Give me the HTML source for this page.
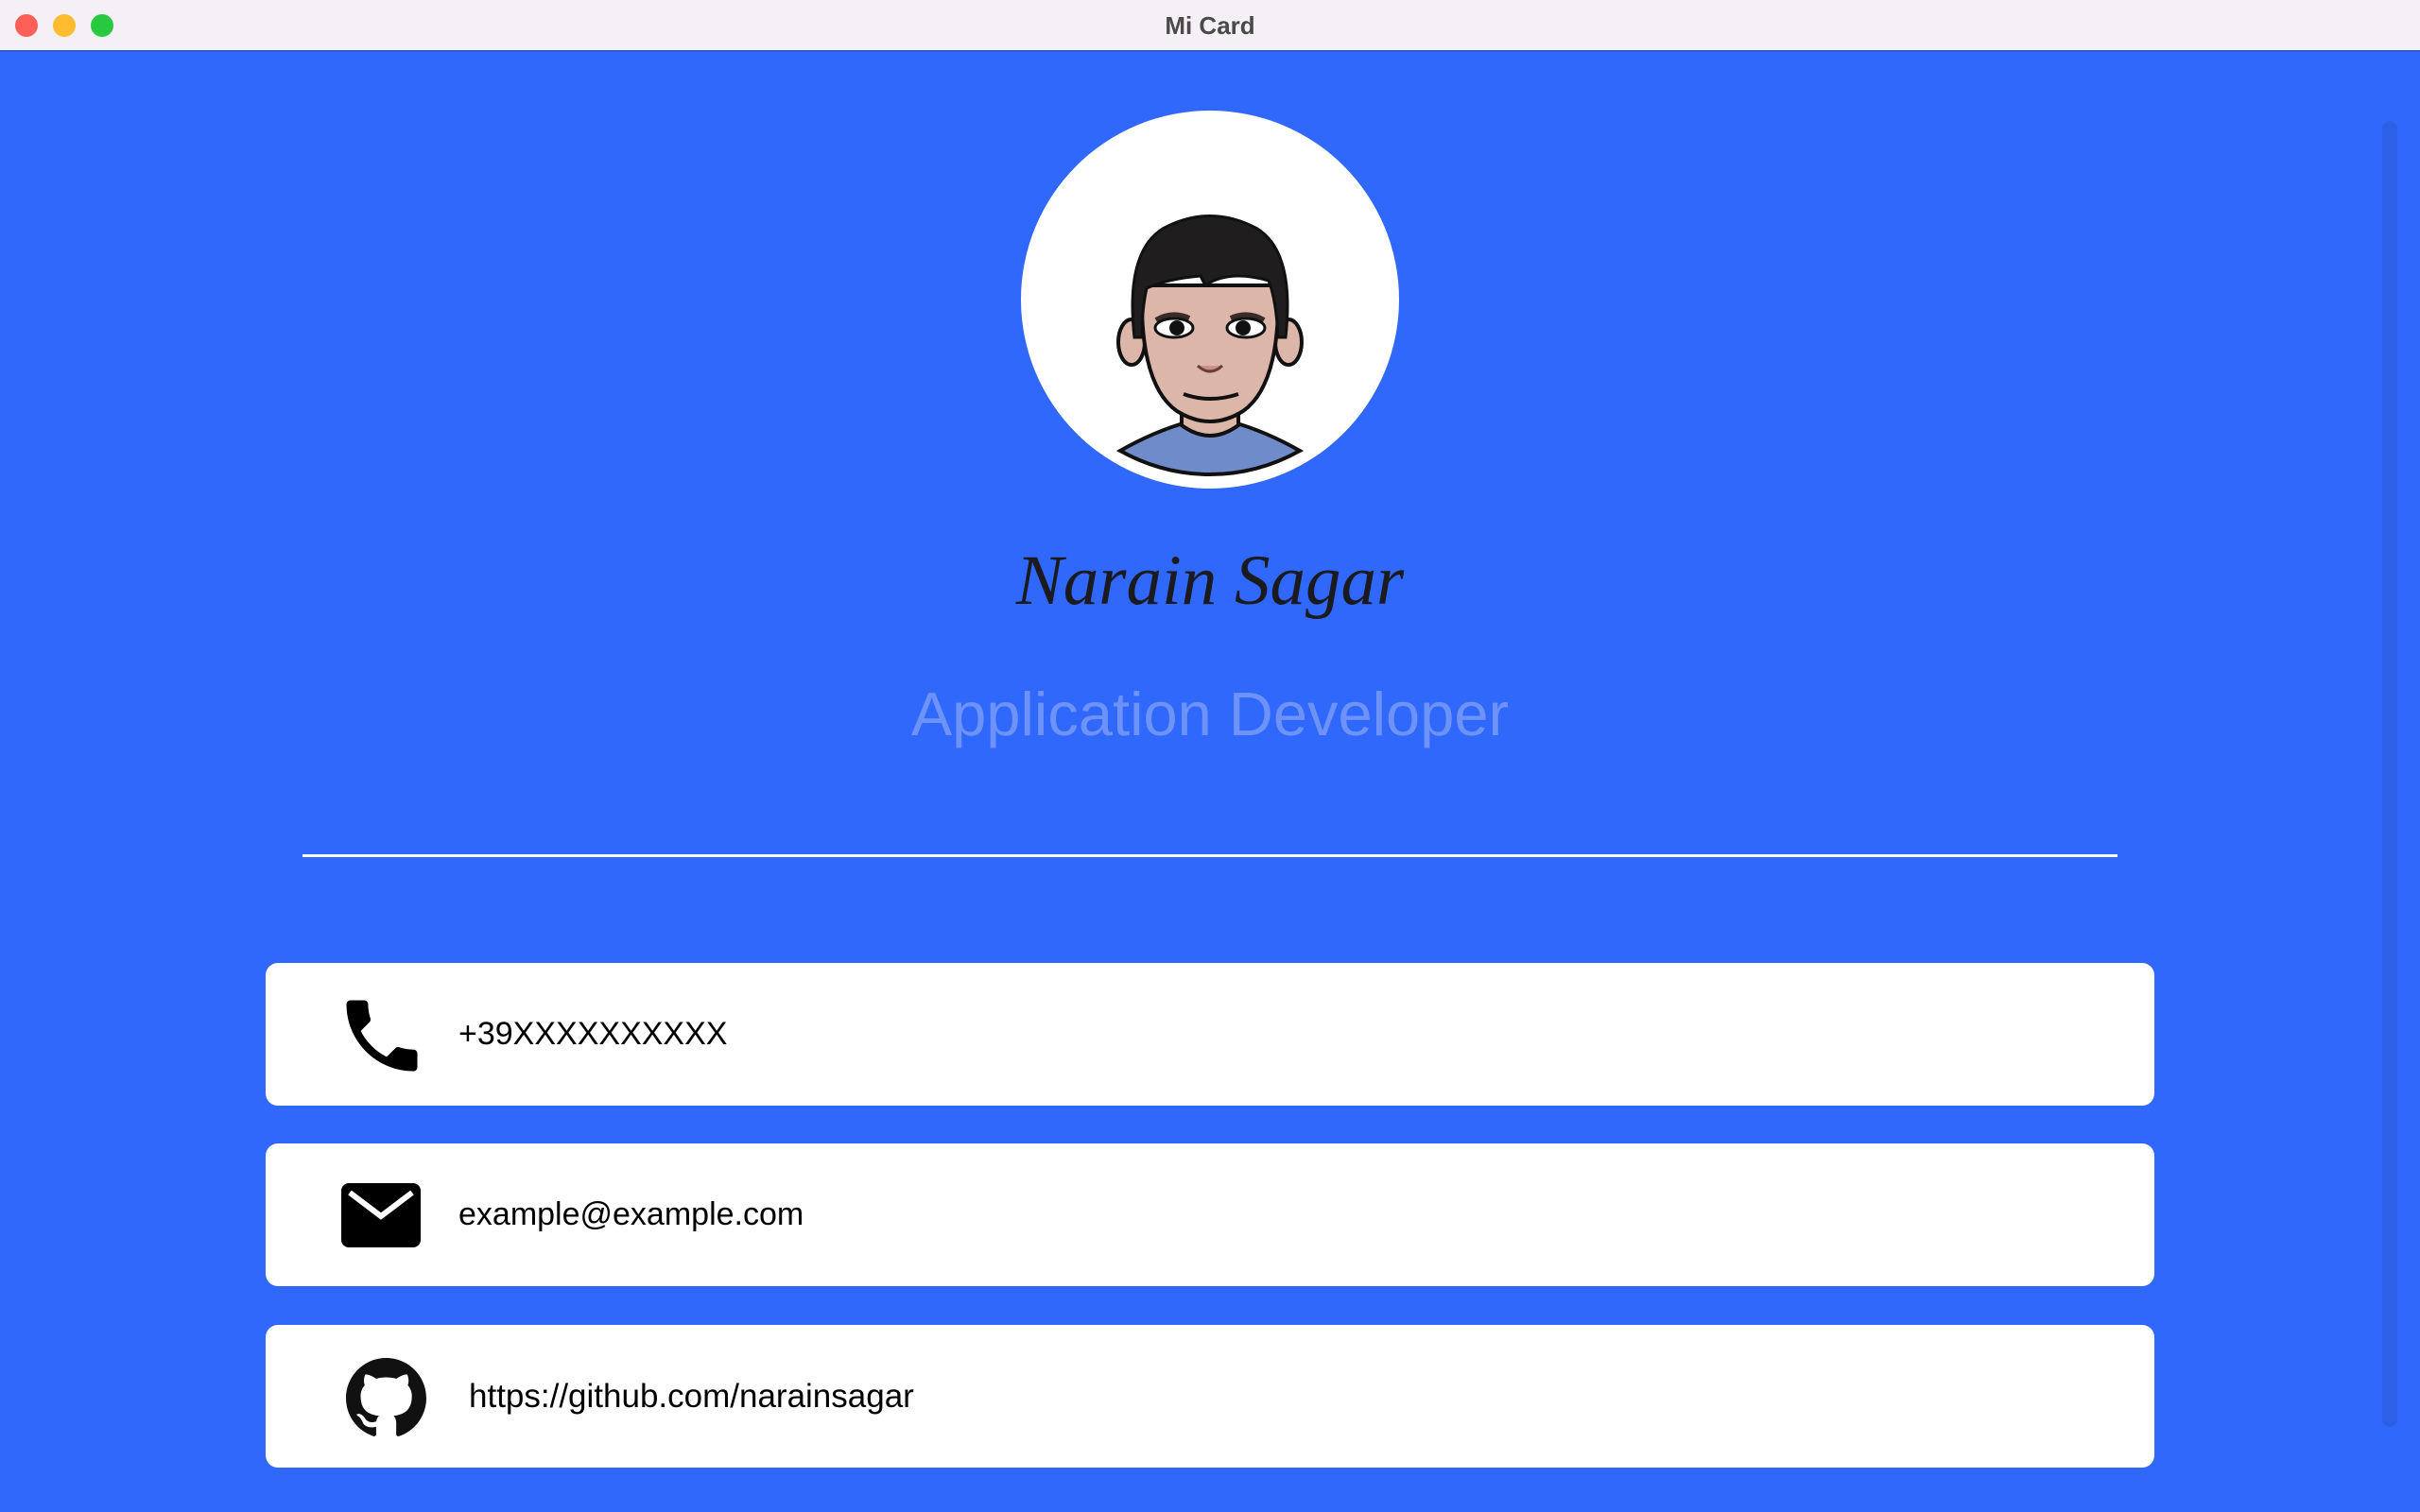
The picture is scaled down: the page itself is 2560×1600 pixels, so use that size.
<!DOCTYPE html>
<html><head><meta charset="utf-8"><style>
*{margin:0;padding:0;box-sizing:border-box}
body{width:2560px;height:1600px;overflow:hidden;background:#3068fb;font-family:"Liberation Sans",sans-serif;position:relative}
.tb{position:absolute;left:0;top:0;width:2560px;height:55px;background:#f5eff6;border-bottom:2px solid #2a58d8}
.tl{position:absolute;top:15px;width:24px;height:24px;border-radius:50%}
.title{position:absolute;top:0;left:0;width:2560px;line-height:54px;text-align:center;font-size:26px;font-weight:bold;color:#4a4a4a}
.av{position:absolute;left:1080px;top:117px;width:400px;height:400px;border-radius:50%;background:#fff;overflow:hidden}
.name{position:absolute;left:0;width:2560px;top:572px;text-align:center;font-family:"Liberation Serif",serif;font-style:italic;font-size:75px;color:#1b1b1f}
.role{position:absolute;left:0;width:2560px;top:718px;text-align:center;font-size:65px;color:#6e93f8}
.hr{position:absolute;left:320px;top:904px;width:1920px;height:3px;background:#fff}
.card{position:absolute;left:281px;width:1998px;height:151px;background:#fff;border-radius:13px}
.card span{position:absolute;top:0;line-height:151px;font-size:34px;color:#000}
.sb{position:absolute;left:2520px;top:128px;width:16px;height:1382px;border-radius:8px;background:#2d60e6}
</style></head><body>
<div class="tb">
<div class="tl" style="left:16px;background:#fe5f57"></div>
<div class="tl" style="left:56px;background:#febc2e"></div>
<div class="tl" style="left:96px;background:#28c840"></div>
<div class="title">Mi Card</div>
</div>
<div class="sb"></div>
<div class="av">
<svg width="400" height="400" viewBox="0 0 400 400">
<path d="M105 360 Q140 340 175 330 L225 330 Q260 340 295 360 Q250 385 200 385 Q150 385 105 360Z" fill="#6f8bc9" stroke="#111" stroke-width="4"/>
<path d="M170 300 L170 333 Q200 355 230 333 L230 300Z" fill="#dcb6a8" stroke="#111" stroke-width="4"/>
<ellipse cx="117" cy="245" rx="14" ry="24" fill="#dcb6a8" stroke="#111" stroke-width="4"/>
<ellipse cx="283" cy="245" rx="14" ry="24" fill="#dcb6a8" stroke="#111" stroke-width="4"/>
<path d="M128 185 Q125 290 165 318 Q200 340 235 318 Q275 290 272 185Z" fill="#dcb6a8" stroke="#111" stroke-width="4"/>
<path d="M120 240 Q110 150 150 125 Q200 98 250 125 Q290 150 280 240 L272 240 Q270 200 262 180 Q220 168 195 185 L190 175 Q155 178 133 188 Q128 210 128 240Z" fill="#1f1d1e" stroke="#111" stroke-width="3"/>
<path d="M143 222 Q160 212 178 220" stroke="#3b2b28" stroke-width="6" fill="none"/>
<path d="M222 220 Q240 212 257 222" stroke="#3b2b28" stroke-width="6" fill="none"/>
<ellipse cx="162" cy="230" rx="20" ry="10" fill="#fff" stroke="#111" stroke-width="3"/>
<ellipse cx="238" cy="230" rx="20" ry="10" fill="#fff" stroke="#111" stroke-width="3"/>
<circle cx="165" cy="230" r="8" fill="#111"/><circle cx="235" cy="230" r="8" fill="#111"/>
<path d="M187 270 Q200 282 213 270" stroke="#6a3f3a" stroke-width="3" fill="#c9908a"/>
<path d="M172 300 Q200 310 230 300" stroke="#111" stroke-width="4" fill="none"/>
</svg></div>
<div class="name">Narain Sagar</div>
<div class="role">Application Developer</div>
<div class="hr"></div>
<div class="card" style="top:1019px">
<svg style="position:absolute;left:73px;top:27px" width="100" height="100" viewBox="0 0 24 24"><path d="M6.62 10.79c1.44 2.83 3.76 5.14 6.59 6.59l2.2-2.2c.27-.27.67-.36 1.02-.24 1.12.37 2.33.57 3.570.57.55 0 1 .45 1 1V20c0 .55-.45 1-1 1-9.39 0-17-7.61-17-17 0-.55.45-1 1-1h3.5c.55 0 1 .45 1 1 0 1.25.2 2.45.57 3.57.11.35.03.74-.25 1.02l-2.2 2.2z" fill="#000"/></svg>
<span style="left:204px">+39XXXXXXXXXX</span></div>
<div class="card" style="top:1210px">
<svg style="position:absolute;left:80px;top:42px" width="84" height="68" viewBox="0 0 84 68"><rect x="0" y="0" width="84" height="68" rx="8" fill="#000"/><path d="M9 10 L42 35 L75 10" stroke="#fff" stroke-width="6" fill="none"/></svg>
<span style="left:204px">example@example.com</span></div>
<div class="card" style="top:1402px">
<svg style="position:absolute;left:85px;top:35px" width="85" height="85" viewBox="0 0 16 16"><path fill="#111" d="M8 0C3.58 0 0 3.58 0 8c0 3.54 2.290 6.53 5.47 7.59.4.07.55-.17.55-.38 0-.19-.01-.82-.01-1.49-2.01.37-2.53-.49-2.69-.94-.09-.23-.48-.94-.82-1.13-.28-.15-.68-.52-.01-.53.63-.01 1.08.58 1.23.82.72 1.21 1.87.87 2.33.66.07-.52.28-.87.51-1.07-1.78-.2-3.64-.89-3.64-3.95 0-.87.31-1.59.82-2.15-.08-.2-.36-1.02.08-2.12 0 0 .67-.21 2.2.82.64-.18 1.32-.27 2-.27.68 0 1.36.09 2 .27 1.53-1.04 2.2-.82 2.2-.82.44 1.1.16 1.92.08 2.12.51.56.82 1.27.82 2.15 0 3.07-1.87 3.75-3.65 3.95.29.25.54.73.54 1.48 0 1.070-.01 1.93-.01 2.2 0 .21.15.46.55.38A8.013 8.013 0 0016 8c0-4.420-3.58-8-8-8z"/></svg>
<span style="left:215px;font-size:35px">https://github.com/narainsagar</span></div>
</body></html>
